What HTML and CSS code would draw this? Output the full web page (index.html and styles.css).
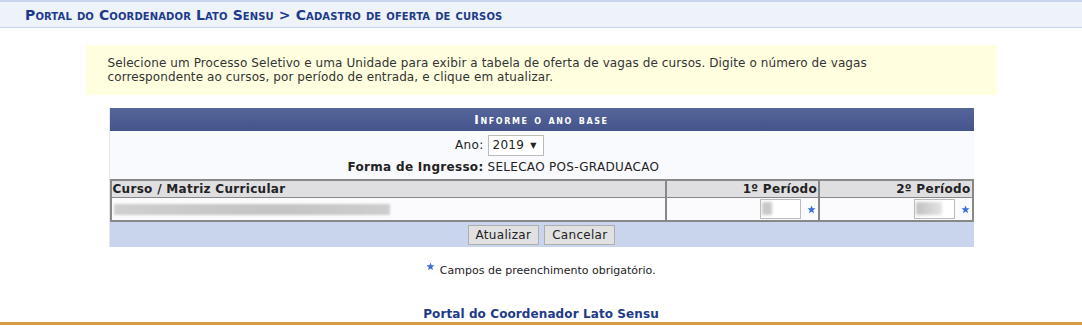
FILE: index.html
```html
<!DOCTYPE html>
<html lang="pt-BR">
<head>
    <meta charset="UTF-8">
    <title>Cadastro de oferta de cursos</title>
    <link rel="stylesheet" href="styles.css">
</head>
<body>
    <div class="titulo">
        <h2>Portal do Coordenador Lato Sensu &gt; Cadastro de oferta de cursos</h2>
    </div>

    <div class="conteudo">
        <div class="descricao">
            Selecione um Processo Seletivo e uma Unidade para exibir a tabela de oferta de vagas de cursos. Digite o número de vagas<br>
            correspondente ao cursos, por período de entrada, e clique em atualizar.
        </div>

        <div class="formulario">
            <div class="caption">Informe o ano base</div>
            <div class="campos">
                <span class="rotulo">Ano:</span>
                <span><span class="select">2019 <span class="seta">&#9660;</span></span></span>
                <span class="rotulo negrito">Forma de Ingresso:</span>
                <span>SELECAO POS-GRADUACAO</span>
            </div>
            <table class="listagem">
                <thead>
                    <tr>
                        <th class="curso">Curso / Matriz Curricular</th>
                        <th class="periodo">1º Período</th>
                        <th class="periodo">2º Período</th>
                    </tr>
                </thead>
                <tbody>
                    <tr>
                        <td><span class="borrado"></span></td>
                        <td class="vagas"><span class="input"><span class="mancha"></span></span><svg class="estrela" viewBox="0 0 10 10"><path d="M5 0.5 L6.2 3.6 L9.5 3.7 L6.9 5.8 L7.8 9.2 L5 7.3 L2.2 9.2 L3.1 5.8 L0.5 3.7 L3.8 3.6 Z"/></svg></td>
                        <td class="vagas"><span class="input"><span class="mancha larga"></span></span><svg class="estrela" viewBox="0 0 10 10"><path d="M5 0.5 L6.2 3.6 L9.5 3.7 L6.9 5.8 L7.8 9.2 L5 7.3 L2.2 9.2 L3.1 5.8 L0.5 3.7 L3.8 3.6 Z"/></svg></td>
                    </tr>
                </tbody>
            </table>
            <div class="botoes">
                <button>Atualizar</button>
                <button>Cancelar</button>
            </div>
        </div>

        <p class="obrigatorio">
            <svg class="estrela" viewBox="0 0 10 10"><path d="M5 0.5 L6.2 3.6 L9.5 3.7 L6.9 5.8 L7.8 9.2 L5 7.3 L2.2 9.2 L3.1 5.8 L0.5 3.7 L3.8 3.6 Z"/></svg>
            Campos de preenchimento obrigatório.
        </p>
    </div>

    <div class="rodape">Portal do Coordenador Lato Sensu</div>
</body>
</html>
```

FILE: styles.css
```css
body {
    margin: 0;
    font-family: "DejaVu Sans", Verdana, sans-serif;
    font-size: 12px;
    letter-spacing: 0.3px;
    color: #222;
    background: #fff;
}
.titulo {
    border-top: 2px solid #c8d5ec;
    border-bottom: 1px solid #c8d5ec;
    background: #eef2f9;
    height: 25px;
    display: flex;
    align-items: center;
    padding-left: 25px;
}
.titulo h2 {
    margin: 0;
    font-size: 14px;
    font-variant: small-caps;
    font-weight: bold;
    color: #1e3a8a;
    letter-spacing: 0.12px;
}
.conteudo {
    width: 911px;
    margin: 0 auto;
    padding-top: 17px;
}
.descricao {
    background: #ffffe0;
    padding: 11px 22px 11px 22px;
    line-height: 14px;
    letter-spacing: 0.1px;
    color: #333;
}
.formulario {
    width: 864px;
    margin: 13px auto 0;
    background: #f9fafd;
    border-left: 1px solid #e6e6ec;
}
.caption {
    height: 23px;
    line-height: 24px;
    background: linear-gradient(#56659a, #44538a);
    color: #fff;
    font-weight: bold;
    font-variant: small-caps;
    text-align: center;
    letter-spacing: 1.6px;
}
.campos {
    display: grid;
    grid-template-columns: 374px 1fr;
    column-gap: 4px;
    row-gap: 1px;
    align-items: center;
    padding: 4px 0 1px;
}
.campos .rotulo { text-align: right; }
.campos .negrito { font-weight: bold; }
.campos > span { line-height: 21px; }
.select {
    display: inline-block;
    height: 19px;
    line-height: 19px;
    padding: 0 6px 0 4px;
    border: 1px solid #bbb;
    background: #fff;
    vertical-align: middle;
}
.seta { font-size: 8px; vertical-align: 1px; margin-left: 2px; }
.listagem {
    width: 100%;
    border-collapse: collapse;
}
.listagem th {
    background: #dfdfe2;
    border: 2px solid #888;
    border-bottom-width: 1px;
    font-weight: bold;
    height: 16px;
    padding: 0 1px;
}
.listagem th.curso { text-align: left; width: 551px; }
.listagem th.periodo { text-align: right; }
.listagem td {
    background: #fbfbfd;
    border: 2px solid #888;
    border-top-width: 0;
    height: 22px;
    padding: 0 2px;
}
.listagem td.vagas { text-align: right; padding-right: 2px; }
.borrado {
    display: block;
    width: 276px;
    height: 11px;
    background: linear-gradient(90deg, #d0d0d0 0, #c9c9c9 30%, #c4c4c4 60%, #cecece 100%);
    filter: blur(1px);
}
.input {
    display: inline-block;
    width: 39px;
    height: 18px;
    border: 1px solid #bbb;
    background: #fff;
    vertical-align: middle;
    position: relative;
}
.mancha {
    position: absolute;
    left: 1px;
    top: 2px;
    width: 10px;
    height: 13px;
    background: #c8c8c8;
    filter: blur(1.5px);
}
.mancha.larga { width: 26px; background: linear-gradient(90deg, #c0c0c0, #e4e4e4); }
.estrela {
    width: 9px;
    height: 9px;
    fill: #3b6fd6;
    vertical-align: middle;
    margin-left: 6px;
}
.botoes {
    background: #c8d5ec;
    height: 25px;
    display: flex;
    justify-content: center;
    align-items: center;
    gap: 5px;
}
.botoes button {
    font-family: inherit;
    font-size: 12px;
    letter-spacing: 0.3px;
    background: #e1e1e1;
    border: 1px solid #adadad;
    height: 20px;
    padding: 0 7px;
    color: #222;
}
.obrigatorio {
    text-align: center;
    margin: 15px 0 0;
    font-size: 11px;
    letter-spacing: 0;
}
.obrigatorio .estrela {
    margin: 0 1px 0 0;
    vertical-align: 3px;
}
.rodape {
    margin-top: 31px;
    text-align: center;
    font-weight: bold;
    font-size: 12px;
    letter-spacing: 0.1px;
    line-height: 13px;
    padding-bottom: 1px;
    color: #1e3a8a;
    border-bottom: 3px solid #d89c45;
    box-shadow: 0 3px 0 #3c4a78;
}
```
